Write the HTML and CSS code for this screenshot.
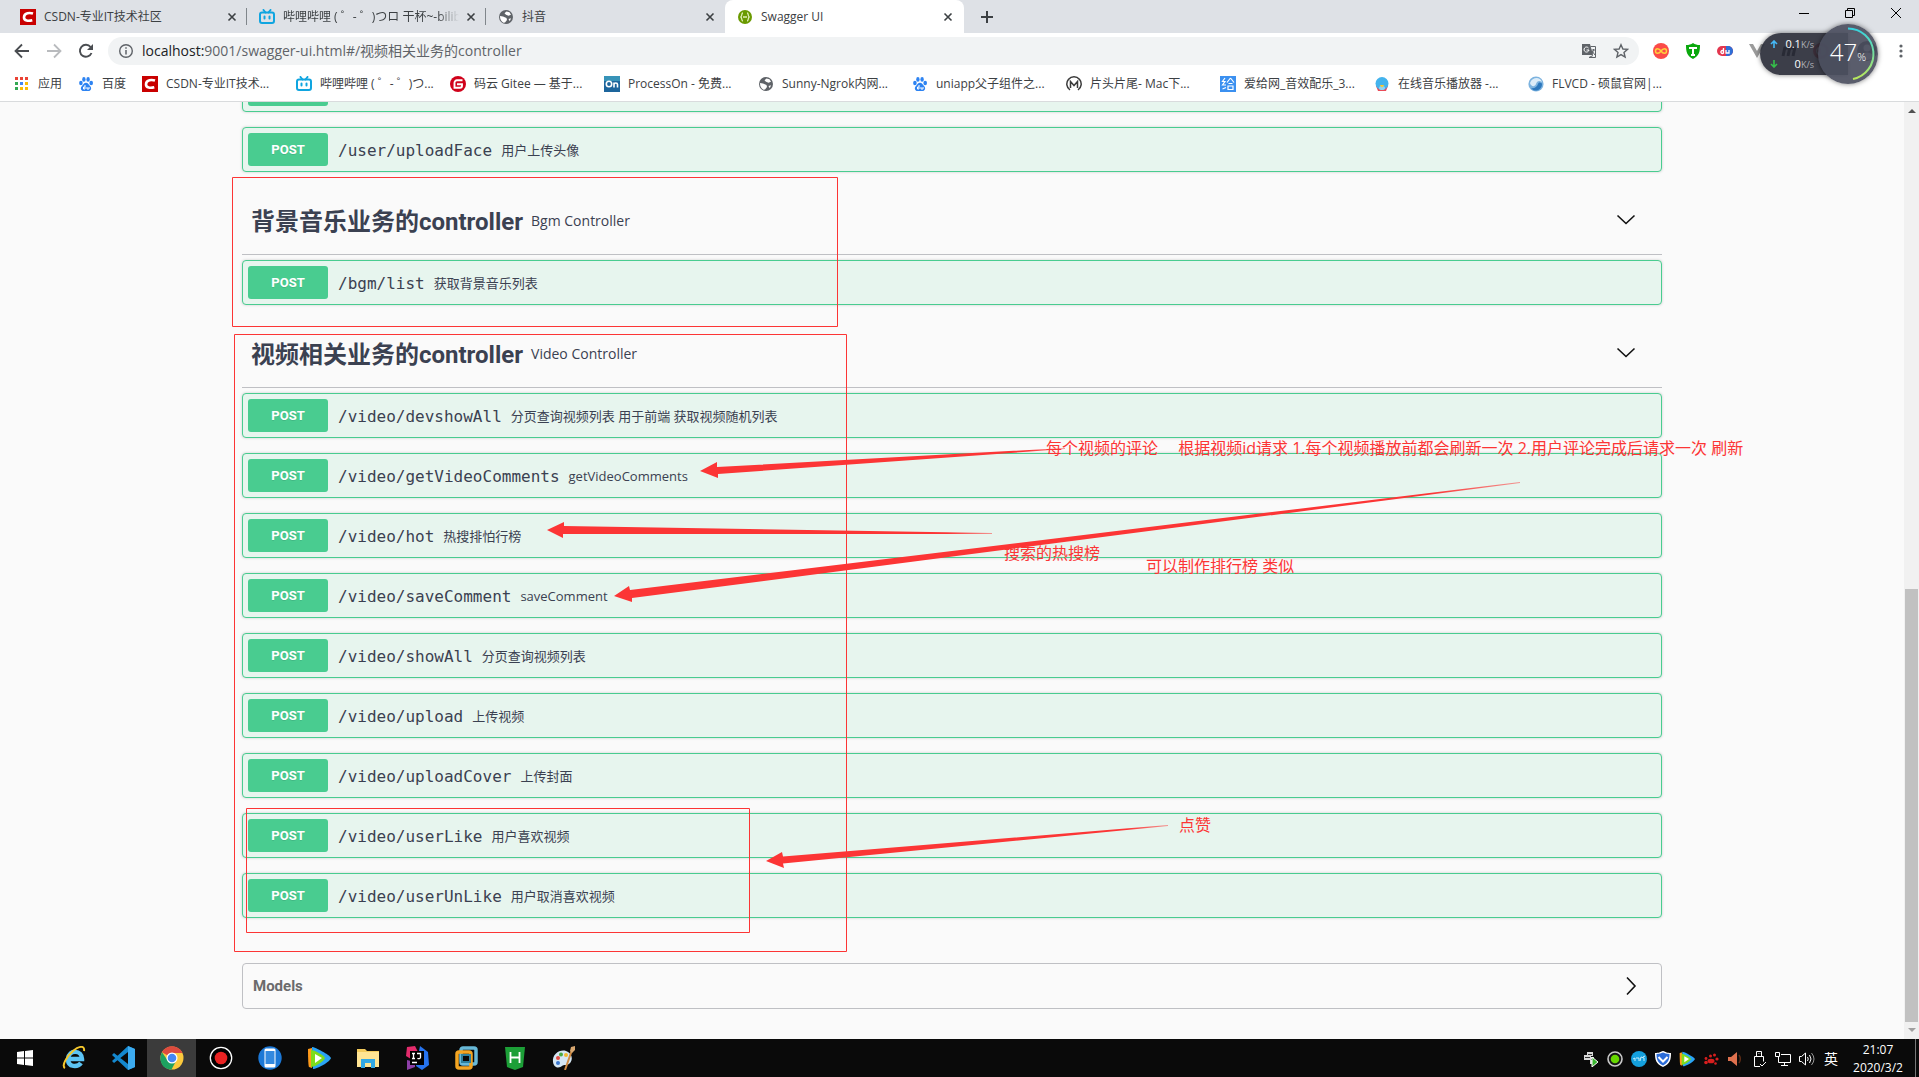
FILE: index.html
```html
<!DOCTYPE html>
<html lang="zh-CN">
<head>
<meta charset="utf-8">
<title>Swagger UI</title>
<link rel="stylesheet" href="styles.css">
</head>
<body>
<svg class="defs" aria-hidden="true">
  <symbol id="csdn" viewBox="0 0 16 16"><path fill="#c90000" d="M0 0h16v16H0z"/><path fill="none" stroke="#fff" stroke-width="2.6" d="M13 4.6C10 3.6 4.2 3.600 4 8.200c-.1 3.800 4.500 4 8.300 3"/></symbol>
  <symbol id="bili" viewBox="0 0 16 16"><path fill="none" stroke="#10a5e0" stroke-width="2" stroke-linecap="round" d="M4.500 1l2 2.500M11.500 1l-2 2.500M5.500 7.500v2M10.500 7.500v2"/><rect x="1" y="3.500" width="14" height="10.500" rx="2" fill="none" stroke="#10a5e0" stroke-width="2"/></symbol>
  <symbol id="globe" viewBox="0 0 16 16"><circle cx="8" cy="8" r="7" fill="#5f6368"/><path fill="#fff" d="M8.500 2.500l3 .8 1.500 2.500-2.500 1-2.500-1-1.500-1.600zM2 7l3 .5 3.500 1.500.5 2-2 2.500-1.500.3C3 12.500 2 10 2 7zM10.500 10l2.500-.8-1.200 3z"/></symbol>
  <symbol id="paw" viewBox="0 0 16 16"><g fill="#2d83f2"><ellipse cx="2.900" cy="7" rx="1.800" ry="2.300"/><ellipse cx="5.900" cy="3.400" rx="1.700" ry="2.400"/><ellipse cx="10.100" cy="3.400" rx="1.700" ry="2.400"/><ellipse cx="13.200" cy="7" rx="1.800" ry="2.300"/><path d="M8 6.800c2 0 2.500 1.800 4 3.200 2.500 2.400.5 5.500-2 5H6c-2.500.5-4.500-2.600-2-5 1.500-1.400 2-3.200 4-3.200z"/></g><path stroke="#fff" fill="none" d="M7 9v4H5.500v-2H7M9 11v2h2v-2"/></symbol>
  <symbol id="x" viewBox="0 0 16 16"><path stroke="currentColor" stroke-width="1.600" d="M4.500 4.500l7 7M11.500 4.500l-7 7"/></symbol>
  <symbol id="play" viewBox="0 0 24 24"><path fill="#ff9a1a" d="M1 3l4-1v20l-3-1c-1-1-1-17-1-18z"/><path fill="#2aa4f5" d="M5 1c3 0 18 8 19 11-1 4-14 11-18 11z"/><path fill="#7ddc1c" d="M4 4c3 0 13 5 14 8-1 4-11 9-14 9z"/><path fill="#fff" d="M8 8l7 4-7 5z"/></symbol>
  <symbol id="down" viewBox="0 0 20 20"><path fill="none" stroke="#111" stroke-width="1.600" d="M1.500 4.500l8.500 8 8.500-8"/></symbol>
</svg>

<header class="browser">
  <nav class="tabs">
    <div class="tab"><svg class="fav"><use href="#csdn"/></svg><span class="tab-title">CSDN-专业IT技术社区</span><button class="close" aria-label="关闭"><svg><use href="#x"/></svg></button></div>
    <div class="tab"><svg class="fav"><use href="#bili"/></svg><span class="tab-title fade">哔哩哔哩 ( ゜- ゜)つロ 干杯~-bilibili</span><button class="close" aria-label="关闭"><svg><use href="#x"/></svg></button></div>
    <div class="tab last"><svg class="fav"><use href="#globe"/></svg><span class="tab-title">抖音</span><button class="close" aria-label="关闭"><svg><use href="#x"/></svg></button></div>
    <div class="tab active"><svg class="fav" viewBox="0 0 16 16"><circle cx="8" cy="8" r="7" fill="#6a9a00"/><path fill="none" stroke="#dfeeb5" stroke-width="1.300" d="M6 4C4 4 5.500 7.500 3.500 8 5.500 8.500 4 12 6 12M10 4c2 0 .5 3.500 2.500 4-2 .5-.5 4-2.500 4M6 8h4"/></svg><span class="tab-title">Swagger UI</span><button class="close" aria-label="关闭"><svg><use href="#x"/></svg></button></div>
    <button class="new-tab" aria-label="新标签页"><svg viewBox="0 0 16 16"><path stroke="#3c4043" stroke-width="2" d="M8 2v12M2 8h12"/></svg></button>
    <div class="win">
      <button aria-label="最小化"><svg viewBox="0 0 12 12"><path stroke="#000" d="M1 6.500h10"/></svg></button>
      <button aria-label="还原"><svg viewBox="0 0 12 12"><path fill="none" stroke="#000" d="M1.500 3.500h7v7h-7zM3.500 3.500v-2h7v7h-2"/></svg></button>
      <button aria-label="关闭窗口"><svg viewBox="0 0 12 12"><path stroke="#000" d="M1 1l10 10M11 1L1 11"/></svg></button>
    </div>
  </nav>

  <div class="toolbar">
    <button aria-label="后退"><svg viewBox="0 0 16 16"><path fill="none" stroke="#4a4d51" stroke-width="1.800" d="M15 8H2M8 1.500L1.500 8 8 14.500"/></svg></button>
    <button aria-label="前进"><svg viewBox="0 0 16 16"><path fill="none" stroke="#b9bbbe" stroke-width="1.800" d="M1 8h13M8 1.500L14.500 8 8 14.500"/></svg></button>
    <button aria-label="刷新"><svg viewBox="0 0 16 16"><path fill="none" stroke="#4a4d51" stroke-width="1.900" d="M13.500 10A6 6 0 1 1 12.600 4"/><path fill="#4a4d51" d="M15 1v6H9z"/></svg></button>
    <div class="omnibox">
      <svg viewBox="0 0 16 16"><circle cx="8" cy="8" r="6.300" fill="none" stroke="#5f6368" stroke-width="1.400"/><path stroke="#5f6368" stroke-width="1.500" d="M8 7v4.500M8 4.300v1.500"/></svg>
      <p class="url"><b>localhost:</b>9001/swagger-ui.html#/视频相关业务的controller</p>
      <svg viewBox="0 0 16 16"><path fill="#5f6368" d="M1 1h8l3 11H1z"/><path fill="none" stroke="#5f6368" d="M9.500 3.500h5v11H8l4-2"/><path fill="none" stroke="#fff" d="M7.500 5A2.500 2.500 0 1 0 8 7H5.500"/><path fill="none" stroke="#5f6368" d="M10.500 7h4M12.500 6v1l-1.500 4M11 8l3 4"/></svg>
      <svg class="star" viewBox="0 0 16 16"><path fill="none" stroke="#5f6368" stroke-width="1.400" d="M8 1.700l1.900 4.300 4.700.4-3.600 3.100 1.100 4.600L8 11.600l-4.100 2.500L5 9.500 1.400 6.400 6.100 6z"/></svg>
    </div>
    <div class="exts">
      <svg viewBox="0 0 16 16"><circle cx="8" cy="8" r="8" fill="#fb4b48"/><path fill="none" stroke="#ffd23c" stroke-width="1.500" d="M8 8C6 5 2.500 5 2.500 8S6 11 8 8s5.500-3 5.500 0S10 11 8 8z"/></svg>
      <svg viewBox="0 0 16 16"><path fill="#0aa80d" d="M1 2c3 0 5-.5 7-2 2 1.500 4 2 7 2 0 7-1 11-7 14C2 13 1 9 1 2z"/><path fill="none" stroke="#fff" stroke-width="2" d="M4 5h8M8 5v7M6 12h4"/></svg>
      <svg viewBox="0 0 16 16"><rect y="3" width="16" height="10" rx="5" fill="#e3364e"/><path fill="#2d6fd8" d="M9 3h2a5 5 0 0 1 0 10H9z"/><path fill="none" stroke="#fff" stroke-width="1.300" d="M6.500 5v5.500M6.500 8a1.500 1.500 0 1 0 0 2M9 7v3h3V7"/></svg>
      <svg viewBox="0 0 16 16"><path fill="#9b9b9b" d="M0 1h4l4 7 4-7h4L8 15z"/></svg>
      <svg viewBox="0 0 16 16"><path fill="none" stroke="#000" stroke-width="3" d="M2 13L4 4M7 13L9 4M12 13l2-9M3 5h11"/></svg>
      <svg viewBox="0 0 16 16"><circle cx="8" cy="8" r="6.500" fill="none" stroke="#e02f2f" stroke-width="3"/><path fill="#e02f2f" d="M8 4v8L4 8z"/></svg>
      <svg class="avatar" viewBox="0 0 20 20"><circle cx="10" cy="10" r="10" fill="#222"/><circle cx="10" cy="7" r="3.500" fill="#bbb"/><path fill="#bbb" d="M3 16c2-6 12-6 14 0-4 4-10 4-14 0z"/></svg>
      <button class="menu" aria-label="菜单"><svg viewBox="0 0 16 16"><g fill="#5f6368"><circle cx="8" cy="3" r="1.600"/><circle cx="8" cy="8" r="1.600"/><circle cx="8" cy="13" r="1.600"/></g></svg></button>
    </div>
  </div>

  <nav class="bookmarks">
    <a class="short" href="#apps"><svg viewBox="0 0 16 16"><path fill="#ea4335" d="M1 1h3v3H1zM6 1h3v3H6zM11 1h3v3h-3z"/><path fill="#34a853" d="M1 6h3v3H1zM1 11h3v3H1z"/><path fill="#4285f4" d="M6 6h3v3H6z"/><path fill="#fbbc05" d="M11 6h3v3h-3zM6 11h3v3H6zM11 11h3v3h-3z"/></svg>应用</a>
    <a class="short" href="#baidu"><svg><use href="#paw"/></svg>百度</a>
    <a href="#csdn-home"><svg><use href="#csdn"/></svg>CSDN-专业IT技术...</a>
    <a href="#bilibili"><svg><use href="#bili"/></svg>哔哩哔哩 ( ゜- ゜)つ...</a>
    <a href="#gitee"><svg viewBox="0 0 16 16"><circle cx="8" cy="8" r="8" fill="#d0021b"/><path fill="none" stroke="#fff" stroke-width="1.900" d="M12.500 4.300H7A2.500 2.500 0 0 0 4.500 7v4.700H10a2 2 0 0 0 2-2V8.200H7"/></svg>码云 Gitee — 基于...</a>
    <a href="#processon"><svg viewBox="0 0 16 16"><path fill="#1d659c" d="M0 0h16v16H0z"/><path fill="#3793b8" d="M0 0h16v5H0z"/><circle cx="5" cy="8" r="2.700" fill="none" stroke="#fff" stroke-width="1.600"/><path fill="none" stroke="#fff" stroke-width="1.600" d="M10 11.500V6.500M10 8.500c0-2 3.500-2 3.500 0v3"/></svg>ProcessOn - 免费...</a>
    <a href="#ngrok"><svg><use href="#globe"/></svg>Sunny-Ngrok内网...</a>
    <a href="#uniapp"><svg><use href="#paw"/></svg>uniapp父子组件之...</a>
    <a href="#mac"><svg viewBox="0 0 16 16"><path fill="none" stroke="#3b3b3b" stroke-width="1.500" d="M4 14A7.200 7.200 0 1 1 12 14M4.500 12V5.500L8 9.500l3.500-4V12"/></svg>片头片尾- Mac下...</a>
    <a href="#aigei"><svg viewBox="0 0 16 16"><path fill="#3b90f0" d="M0 0h16v16H0z"/><path fill="none" stroke="#fff" stroke-width="1.200" d="M5 2L2.500 5.500H5L2.500 9H6M2.500 13L6 11.500M10.500 2L7 6.500M10.500 2L14 6.500M8.500 7.500h4M8 10h5v3.500H8z"/></svg>爱给网_音效配乐_3...</a>
    <a href="#music"><svg viewBox="0 0 16 16"><path fill="#e94b58" d="M2 10h12l-2 5H4z"/><circle cx="8" cy="7.500" r="6.500" fill="#43b3ed"/><ellipse cx="8" cy="12" rx="3" ry="2" fill="#8fd4f7"/><path fill="#ffc62c" d="M5.500 9h5L8 11.500z"/></svg>在线音乐播放器 -...</a>
    <a href="#flvcd"><svg viewBox="0 0 16 16"><circle cx="8" cy="8" r="7.600" fill="#7db3df"/><path fill="#dcecf8" d="M2 7c2-6 10-7 12-1-3-2-5-1-6 2s-5 3-6-1z"/><path fill="#2d78bd" d="M3 12c3 1 6-1 7-4s4-1 4 0c0 6-7 9-11 4z"/></svg>FLVCD - 硕鼠官网|...</a>
  </nav>

  <aside class="meter">
    <div class="speeds">
      <p><svg viewBox="0 0 8 8"><path fill="none" stroke="#45b8f5" stroke-width="1.600" d="M4 8V1M1 4l3-3 3 3"/></svg><span>0.1<small>K/s</small></span></p>
      <p><svg viewBox="0 0 8 8"><path fill="none" stroke="#35c04a" stroke-width="1.600" d="M4 0v7M1 4l3 3 3-3"/></svg><span>0<small>K/s</small></span></p>
    </div>
    <div class="dial">
      <svg viewBox="0 0 60 60"><defs><linearGradient id="arc" x2="0" y2="1"><stop stop-color="#35d3e0"/><stop offset="1" stop-color="#b9e85a"/></linearGradient></defs><path fill="none" stroke="url(#arc)" stroke-width="2" d="M30 4.500a25.500 25.500 0 0 1 5 50.500"/></svg>
      <p>47<small>%</small></p>
    </div>
  </aside>
</header>

<div class="viewport">
  <main class="scroll">
    <div class="wrapper">
      <button class="op" aria-label="展开"><span class="verb"></span></button>
      <button class="op"><span class="verb">POST</span><code>/user/uploadFace</code><span>用户上传头像</span></button>

      <div class="tag"><h2>背景音乐业务的controller</h2><small>Bgm Controller</small><button aria-label="收起"><svg><use href="#down"/></svg></button></div>
      <button class="op"><span class="verb">POST</span><code>/bgm/list</code><span>获取背景音乐列表</span></button>

      <div class="tag"><h2>视频相关业务的controller</h2><small>Video Controller</small><button aria-label="收起"><svg><use href="#down"/></svg></button></div>
      <button class="op"><span class="verb">POST</span><code>/video/devshowAll</code><span>分页查询视频列表 用于前端 获取视频随机列表</span></button>
      <button class="op"><span class="verb">POST</span><code>/video/getVideoComments</code><span>getVideoComments</span></button>
      <button class="op"><span class="verb">POST</span><code>/video/hot</code><span>热搜排怕行榜</span></button>
      <button class="op"><span class="verb">POST</span><code>/video/saveComment</code><span>saveComment</span></button>
      <button class="op"><span class="verb">POST</span><code>/video/showAll</code><span>分页查询视频列表</span></button>
      <button class="op"><span class="verb">POST</span><code>/video/upload</code><span>上传视频</span></button>
      <button class="op"><span class="verb">POST</span><code>/video/uploadCover</code><span>上传封面</span></button>
      <button class="op"><span class="verb">POST</span><code>/video/userLike</code><span>用户喜欢视频</span></button>
      <button class="op"><span class="verb">POST</span><code>/video/userUnLike</code><span>用户取消喜欢视频</span></button>

      <button class="models">Models<svg viewBox="0 0 20 20"><path fill="none" stroke="#111" stroke-width="1.600" d="M6 1.500l8 8.500-8 8.500"/></svg></button>

      <svg class="marks" viewBox="222 67 1460 972">
        <defs>
          <linearGradient id="fade"><stop offset=".9" stop-color="#fc3535"/><stop offset="1" stop-color="#fc3535" stop-opacity=".5"/></linearGradient>
        </defs>
        <g fill="none" stroke="#fc3535"><path d="M232.500 177.500h605v149h-605zM234.500 334.500h612v617h-612zM246.500 808.500h503v124h-503z"/></g>
        <g fill="url(#fade)">
          <path d="M700 471l17-9v5L1065 448v1L718 474v4z"/>
          <path d="M547 530l17-8v4L992 533v1L563 534v4z"/>
          <path d="M614 596l15-10 1 4L1520 482v1L632 598v4z"/>
          <path d="M766 861l16-9 1 4.500L1168 825v1L783 863.500l1 4.500z"/>
        </g>
      </svg>
      <p class="note n1">每个视频的评论&emsp;&nbsp;根据视频id请求 1.每个视频播放前都会刷新一次 2.用户评论完成后请求一次 刷新</p>
      <p class="note n2">搜索的热搜榜</p>
      <p class="note n3">可以制作排行榜 类似</p>
      <p class="note n4">点赞</p>
    </div>
  </main>
  <div class="scrollbar">
    <svg viewBox="0 0 15 17"><path fill="#505050" d="M4 11l4-4 4 4z"/></svg>
    <div class="track"><div class="thumb"></div></div>
    <svg viewBox="0 0 15 17"><path fill="#a0a0a0" d="M4 6l4 4 4-4z"/></svg>
  </div>
</div>

<footer class="taskbar">
  <button aria-label="开始"><svg viewBox="0 0 24 24"><path fill="#fff" d="M4 6l7-1v6.500H4zM12 4.900L20 4v7.500h-8zM4 12.500h7V19l-7-1zM12 12.500h8V20l-8-1z"/></svg></button>
  <button aria-label="Internet Explorer"><svg viewBox="0 0 24 24"><path fill="none" stroke="#5cc4f5" stroke-width="4.500" d="M6 13h14c0-9-13-10-14 0 0 9 10 8 13 4"/><path fill="none" stroke="#f5c72c" stroke-width="2" d="M3 22c-4-2 2-12 8-17s12-6 11 0"/></svg></button>
  <button aria-label="Visual Studio Code"><svg viewBox="0 0 24 24"><path fill="#1488cf" d="M17 0l7 3v18l-7 3L1 9l2-2 14 11V6L3 17l-2-2z"/><path fill="#3cabf0" d="M17 0l7 3v18l-7 3z"/></svg></button>
  <button class="on" aria-label="Chrome"><svg viewBox="0 0 24 24"><circle cx="12" cy="12" r="11.500" fill="#fbc93d"/><path fill="#dd4b3e" d="M12 12L2 6.300C7-2.500 19-1 22.500 7H12z"/><path fill="#1da260" d="M2 6.300L8 15l4 8.500C2 24-2 14 2 6.300z"/><path fill="#1da260" d="M7 14l9 1-4.500 8.500z"/><circle cx="12" cy="12" r="5.500" fill="#fff"/><circle cx="12" cy="12" r="4.300" fill="#4587f3"/></svg></button>
  <button aria-label="录屏"><svg viewBox="0 0 24 24"><circle cx="12" cy="12" r="10.700" fill="#000" stroke="#fff" stroke-width="1.300"/><circle cx="12" cy="12" r="6.300" fill="#e92222"/></svg></button>
  <button aria-label="手机助手"><svg viewBox="0 0 24 24"><circle cx="12" cy="12" r="11.700" fill="#1c78d6"/><rect x="6.500" y="2.500" width="11" height="19" rx="1.500" fill="#fff"/><path fill="#3389df" d="M7.500 5h9v13h-9z"/></svg></button>
  <button aria-label="腾讯视频"><svg><use href="#play"/></svg></button>
  <button aria-label="文件资源管理器"><svg viewBox="0 0 24 24"><path fill="#f4cb5c" d="M1 3h8l2 2h12v6H1z"/><path fill="#ffe493" d="M1 6h22v15H1z"/><path fill="#32a8e4" d="M5 13h14v9h-4v-5H9v5H5z"/></svg></button>
  <button aria-label="IntelliJ IDEA"><svg viewBox="0 0 24 24"><path fill="#e32b6b" d="M2 1l8-1 4 8-8 5-5-3z"/><path fill="#8d3fa8" d="M2 14l8 2v5l-8 3z"/><path fill="#2674f0" d="M15 0l8 6 1 13-7 5-6-4z"/><path d="M5 5h14v14H5z"/><path fill="none" stroke="#fff" stroke-width="1.300" d="M7 7.500h3M8.500 7.500v5M7 12.500h3M12 7.500h3.500v4c0 1-2 1.500-3 .7M7 16.500h5"/></svg></button>
  <button aria-label="VMware"><svg viewBox="0 0 24 24"><rect x="7" y="2" width="15" height="16" rx="2" fill="none" stroke="#68b9d8" stroke-width="3.500"/><rect x="3" y="6" width="14" height="16" rx="2" fill="none" stroke="#f4a522" stroke-width="3.500"/><path fill="none" stroke="#2d7f9d" stroke-width="2" d="M8 9h8v7H8z"/></svg></button>
  <button aria-label="HBuilderX"><svg viewBox="0 0 24 24"><path fill="#1c9f37" d="M2 1h20l-2 20-8 3-8-3z"/><path fill="none" stroke="#fff" stroke-width="1.800" d="M7.500 6v11M16.500 6v11M7.500 11.500h9"/></svg></button>
  <button aria-label="画图"><svg viewBox="0 0 24 24"><path fill="#d5e6f3" d="M1 16C0 8 8 3 14 5s8 9 3 13c-3 2-5 0-7 2s-8 3-9-4z"/><circle cx="6" cy="12" r="2" fill="#e24c43"/><circle cx="9" cy="8.500" r="2" fill="#49a942"/><circle cx="14" cy="9" r="2" fill="#f2b72d"/><circle cx="6" cy="17" r="2" fill="#3977cf"/><path stroke="#cf8a42" stroke-width="2" d="M20 4l-7 20"/><path fill="#d8a770" d="M18 5l1-4 4-1v4l-3 3z"/></svg></button>

  <div class="tray">
    <svg viewBox="0 0 16 16"><path fill="#d8d8d8" d="M4 1h6v4H8v1h3v7H7V9H1V4h3z"/><path stroke="#333" d="M2 6.500h5M5 3.500h4M8 8.500h2"/><path fill="#38b62f" stroke="#fff" d="M9 6l6 5-6 5z"/></svg>
    <svg viewBox="0 0 16 16"><circle cx="8" cy="8" r="7" fill="#171717" stroke="#c9c9c9" stroke-width="1.600"/><circle cx="8" cy="8" r="4.300" fill="#66d800"/></svg>
    <svg viewBox="0 0 16 16"><circle cx="8" cy="8" r="8" fill="#14a0dd"/><path fill="none" stroke="#c5ecfb" d="M2 8l2-1v3M5 7h3v3M9 10l1-4 3 1v3M12 6l2-1"/></svg>
    <svg viewBox="0 0 16 16"><path fill="#fff" d="M0 2c4 0 5-1 8-2 3 1 4 2 8 2 0 7-1 11-8 14C1 13 0 9 0 2z"/><path fill="#2b6cd9" d="M1.500 3C5 3 6 2 8 1.500 10 2 11 3 14.500 3 14.500 9 13 12 8 14.500 3 12 1.500 9 1.500 3z"/><path fill="none" stroke="#fff" stroke-width="2" d="M3.500 6L8 10.500 12.500 6"/></svg>
    <svg><use href="#play"/></svg>
    <svg viewBox="0 0 16 16"><g fill="#d81e1e"><ellipse cx="8" cy="10" rx="3.500" ry="2.300"/><circle cx="3" cy="11.500" r="1.800"/><circle cx="3" cy="7.500" r="1.400"/><circle cx="7.500" cy="5" r="1.500"/><circle cx="11.500" cy="4" r="1.500"/><circle cx="14" cy="8" r="1.600"/><circle cx="12.500" cy="12.500" r="1.300"/></g></svg>
    <svg viewBox="0 0 16 16"><path fill="#e0714e" d="M1 6h3l6-5v14l-6-5H1z"/><path fill="none" stroke="#5c2b15" stroke-width="1.500" d="M12 4c2 3 2 5 0 8"/></svg>
    <svg viewBox="0 0 16 16"><path fill="none" stroke="#fff" d="M5.500 5V.5h5V5M4.500 15.500h-1V5.500h9v5M4 15.500h5M9 13l2 2 4-4M7 2.500h.5M8.700 2.500h.5"/></svg>
    <svg viewBox="0 0 16 16"><path fill="none" stroke="#fff" d="M.5 1.500h4v4h-4zM6 3.500h9.500v8H3.500V6M9.500 11.500v3M6 14.500h7"/></svg>
    <svg viewBox="0 0 16 16"><path fill="none" stroke="#fff" d="M.5 5.500h2L6.500 2v12l-4-3.500h-2zM8.500 6q1.500 2 0 4M10.500 4q3 4 0 8"/><path fill="none" stroke="#999" d="M12.500 2q5 6 0 12"/></svg>
    <span class="ime">英</span>
    <p class="clock"><time>21:07</time><time>2020/3/2</time></p>
  </div>
</footer>
</body>
</html>
```
FILE: styles.css
```css
* { box-sizing: border-box; }
body {
  margin: 0;
  height: 100vh;
  display: flex;
  flex-direction: column;
  overflow: hidden;
  background: #fafafa;
  color: #3b4151;
  font: 12px/16px "Open Sans", "Noto Sans CJK SC", sans-serif;
}
p, h2 { margin: 0; }
button { margin: 0; padding: 0; border: 0; background: none; color: inherit; font: inherit; }
svg { display: block; flex: none; width: 16px; height: 16px; }
.defs { position: absolute; width: 0; height: 0; }

/* browser chrome */
.browser { position: relative; flex: none; background: #fff; border-bottom: 1px solid #d9dbdd; color: #3c4043; }
.tabs { display: flex; height: 33px; padding-left: 8px; background: #dee1e6; }
.tab { display: flex; align-items: center; width: 239px; margin: 8px 0; padding: 0 6px 0 12px; border-right: 1px solid #80868b; }
.tab.last { border-color: transparent; }
.tab.active { margin: 0; padding-right: 8px; border: 0; border-radius: 8px 8px 0 0; background: #fff; }
.tab-title { flex: 1; min-width: 0; margin-left: 8px; overflow: hidden; white-space: nowrap; }
.fade { -webkit-mask-image: linear-gradient(90deg, #000 88%, transparent); mask-image: linear-gradient(90deg, #000 88%, transparent); }
.close { margin-left: 4px; }
.new-tab { width: 46px; display: grid; place-items: center; }
.win { display: flex; margin-left: auto; }
.win button { width: 46px; height: 26px; display: grid; place-items: center; }
.win svg { width: 12px; height: 12px; }

.toolbar { display: flex; align-items: center; gap: 16px; height: 36px; padding: 0 13px 0 14px; }
.omnibox { flex: 1; display: flex; align-items: center; gap: 16px; height: 28px; margin-left: -2px; padding: 0 10px; border-radius: 14px; background: #f1f3f4; }
.url { flex: 1; margin-left: -8px; color: #5f6368; font-size: 14px; line-height: 20px; white-space: nowrap; }
.url b { color: #202124; font-weight: 400; }
.exts { display: flex; align-items: center; gap: 16px; width: 253px; margin-left: -2px; }
.avatar { width: 20px; height: 20px; margin-left: 12px; }
.menu { margin-left: auto; }

.bookmarks { display: flex; height: 32px; padding: 0 0 2px 14px; align-items: center; overflow: hidden; }
.bookmarks a { display: flex; align-items: center; gap: 8px; width: 154px; flex: none; color: inherit; text-decoration: none; white-space: nowrap; }
.bookmarks .short { width: 64px; }

/* floating network meter */
.meter { position: absolute; top: 24px; right: 41px; display: flex; align-items: center; }
.speeds { width: 88px; height: 42px; margin-right: -30px; padding: 1px 34px 1px 10px; border-radius: 21px 0 0 21px; background: rgba(43, 46, 58, .92); color: #fff; font-size: 11px; box-shadow: 0 0 5px rgba(0, 0, 0, .5); }
.speeds p { display: flex; align-items: center; justify-content: space-between; height: 20px; white-space: nowrap; }
.speeds svg { width: 8px; height: 8px; }
.speeds small { color: #aeb0b6; font-size: 9px; }
.dial { position: relative; display: grid; width: 60px; height: 60px; border-radius: 50%; background: rgba(76, 79, 95, .92); box-shadow: 0 0 5px rgba(0, 0, 0, .5); color: #fff; }
.dial > * { grid-area: 1 / 1; }
.dial svg { width: 60px; height: 60px; }
.dial p { align-self: center; justify-self: center; font-size: 24px; font-weight: 300; line-height: 32px; }
.dial small { font-size: 11px; }

/* page */
.viewport { flex: 1; min-height: 0; display: flex; }
.scroll { flex: 1; min-width: 0; display: flex; flex-direction: column; justify-content: flex-end; overflow: hidden; }
.wrapper { position: relative; width: 100%; max-width: 1460px; margin: 0 auto; padding: 0 20px 30px; }
.op { display: flex; align-items: center; width: 100%; height: 45px; margin-bottom: 15px; padding: 0 5px; border: 1px solid #49cc90; border-radius: 4px; background: #e7f5ee; box-shadow: 0 0 3px rgba(0, 0, 0, .19); font-size: 13px; text-align: left; }
.verb { width: 80px; height: 33px; border-radius: 3px; background: #49cc90; color: #fff; font: bold 13px/34px Roboto, sans-serif; text-align: center; text-shadow: 0 1px 0 rgba(0, 0, 0, .1); }
.op code { padding: 2px 9px 0 10px; font: 16px/24px "DejaVu Sans Mono", monospace; }
.tag { display: flex; align-items: center; height: 68px; margin-bottom: 5px; padding: 0 26px 0 9px; border-bottom: 1px solid #bfc0c4; }
.tag h2 { padding-top: 2px; font: bold 24px/32px Roboto, "Noto Sans CJK SC", sans-serif; }
.tag small { margin-left: 8px; font-size: 14px; line-height: 20px; }
.tag button { margin-left: auto; }
.tag svg, .models svg { width: 20px; height: 20px; }
.models { display: flex; align-items: center; justify-content: space-between; width: 100%; height: 46px; margin-top: 45px; padding: 0 20px 0 10px; border: 1px solid #bfc0c4; border-radius: 4px; color: #6b6b6b; font: bold 15px/20px Roboto, sans-serif; }

/* red annotations drawn over the page */
.marks { position: absolute; top: 0; left: 0; width: 1460px; height: 972px; pointer-events: none; }
.note { position: absolute; color: #fc3535; font: 16px/24px "Open Sans", "Noto Sans CJK SC", sans-serif; white-space: nowrap; }
.n1 { left: 824px; top: 369px; }
.n2 { left: 782px; top: 474px; }
.n3 { left: 924px; top: 487px; }
.n4 { left: 957px; top: 746px; }

.scrollbar { display: flex; flex-direction: column; width: 15px; background: #f1f1f1; }
.scrollbar svg { width: 15px; height: 17px; }
.track { flex: 1; display: flex; flex-direction: column; justify-content: flex-end; padding: 0 1px; }
.thumb { height: 48%; background: #c1c1c1; }

/* taskbar */
.taskbar { flex: none; display: flex; height: 38px; background: #0a0a0a; color: #fff; }
.taskbar > button { display: grid; place-items: center; width: 49px; }
.taskbar > button svg { width: 24px; height: 24px; }
.taskbar > .on { background: #3b3b3b; }
.tray { display: flex; align-items: center; gap: 8px; margin-left: auto; margin-right: 3px; padding: 2px 10px 0 0; border-right: 1px solid #777; }
.ime { width: 16px; font-size: 14px; text-align: center; }
.clock { display: flex; flex-direction: column; width: 54px; margin-left: 4px; text-align: center; line-height: 18px; }
```
